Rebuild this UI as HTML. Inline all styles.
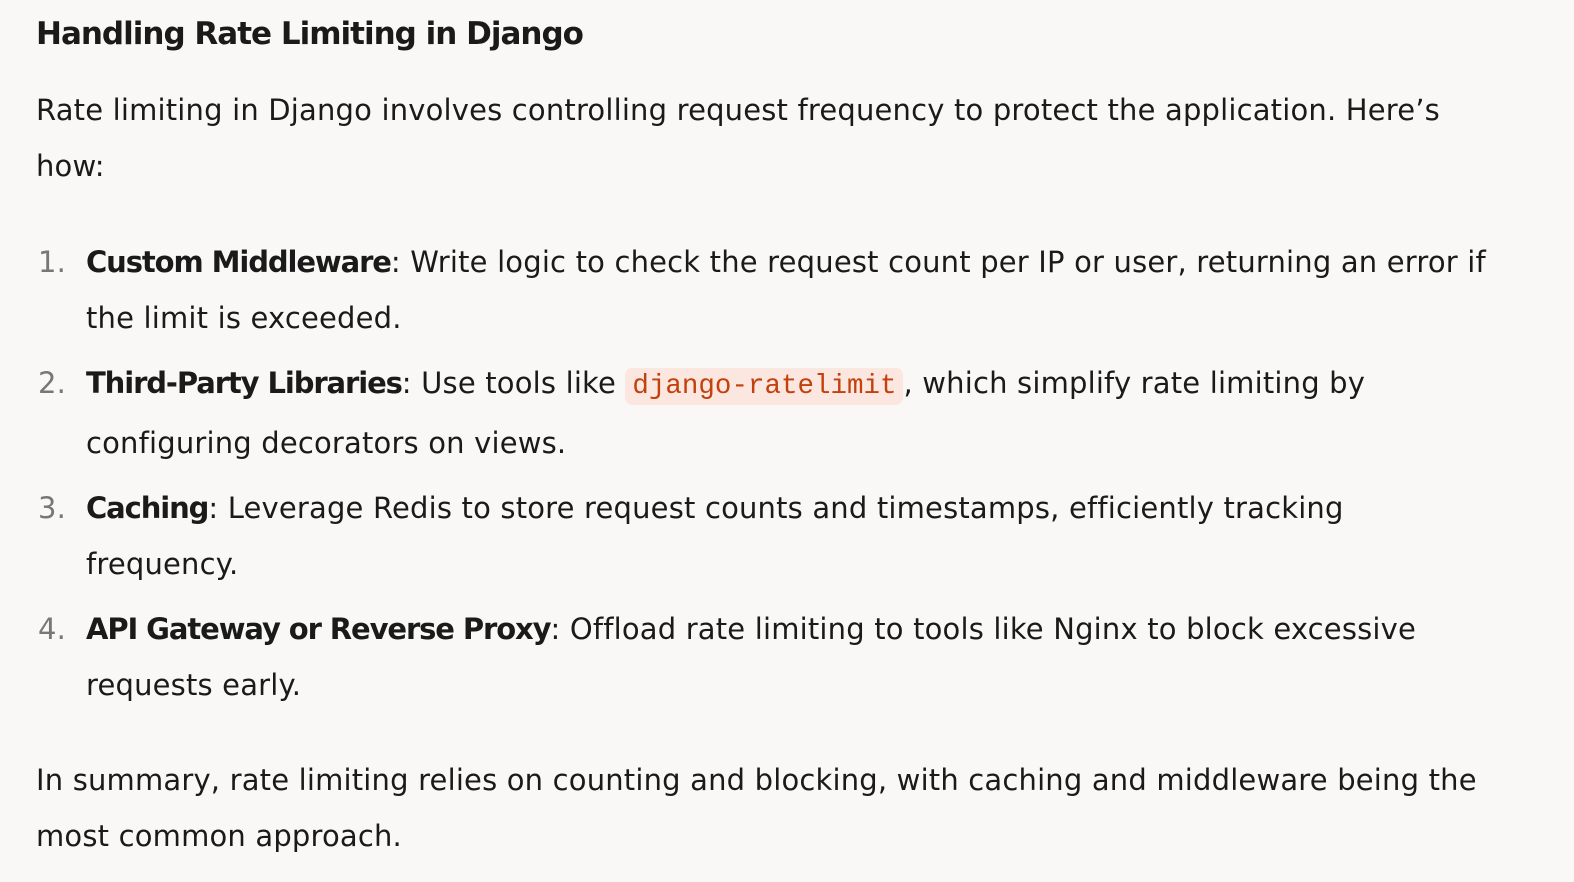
<!DOCTYPE html>
<html><head><style>
body{margin:0;background:#f9f8f6;width:1574px;height:882px;overflow:hidden;font-family:"DejaVu Sans","Liberation Sans",sans-serif;color:#1a1a1a;}
.w{position:absolute;left:36px;width:1530px;white-space:nowrap}
h3{position:absolute;left:36px;top:12px;margin:0;font-size:31px;font-weight:bold;line-height:44px;letter-spacing:-1px}
.p{font-size:29px;line-height:56px;letter-spacing:0.18px}
ol{margin:0;padding:0;list-style:none}
li{position:relative;padding-left:50px;margin-bottom:9px}
li .n{position:absolute;left:2px;color:#777}
b{letter-spacing:-1.1px}
code{font-family:"Liberation Mono",monospace;font-size:27.5px;letter-spacing:0;color:#c2410c;background:#fbe7df;border-radius:7px;padding:3px 7px}
</style></head><body>
<h3>Handling Rate Limiting in Django</h3>
<div class="w p" style="top:82px">Rate limiting in Django involves controlling request frequency to protect the application. Here’s<br>how:</div>
<div class="w p" style="top:234px"><ol>
<li><span class="n">1.</span><b>Custom Middleware</b>: Write logic to check the request count per IP or user, returning an error if<br>the limit is exceeded.</li>
<li><span class="n">2.</span><b>Third-Party Libraries</b>: Use tools like <code>django-ratelimit</code>, which simplify rate limiting by<br>configuring decorators on views.</li>
<li><span class="n">3.</span><b>Caching</b>: Leverage Redis to store request counts and timestamps, efficiently tracking<br>frequency.</li>
<li><span class="n">4.</span><b>API Gateway or Reverse Proxy</b>: Offload rate limiting to tools like Nginx to block excessive<br>requests early.</li>
</ol></div>
<div class="w p" style="top:752px">In summary, rate limiting relies on counting and blocking, with caching and middleware being the<br>most common approach.</div>
</body></html>
